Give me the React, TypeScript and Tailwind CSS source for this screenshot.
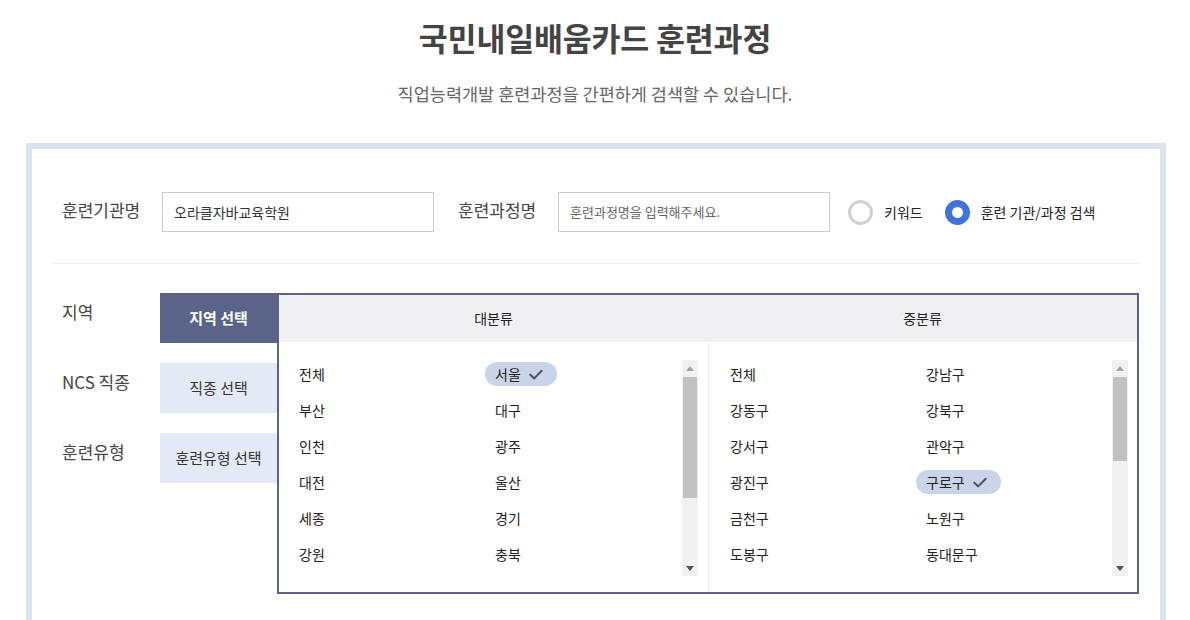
import React from 'react';

const CheckMark = () => (
  <svg width="14" height="11" viewBox="0 0 14 11" fill="none">
    <path d="M1.3 5.8 L5.2 9.4 L12.7 1.8" stroke="#4a5161" strokeWidth="2" strokeLinecap="round" strokeLinejoin="round" />
  </svg>
);

function Item({ label, selected }: { label: string; selected?: boolean }) {
  return (
    <div className="h-[36px] flex items-center">
      <span
        className={
          selected
            ? '-ml-[10px] inline-flex items-center h-[24px] pl-[10px] pr-[14px] gap-[8px] rounded-full bg-[#cad4e8]'
            : 'inline-flex items-center h-[24px]'
        }
      >
        {label}
        {selected && <CheckMark />}
      </span>
    </div>
  );
}

function ScrollBar({ thumbClass }: { thumbClass: string }) {
  return (
    <div className="w-[16px] h-[216px] bg-[#f1f1f1] flex flex-col shrink-0 mt-[18px]">
      <div className="h-[17px] flex items-center justify-center">
        <svg width="8" height="5" viewBox="0 0 8 5"><path d="M0 5 L4 0 L8 5 Z" fill="#a3a3a3" /></svg>
      </div>
      <div className={`mx-[1px] bg-[#c1c1c1] ${thumbClass}`} />
      <div className="flex-1" />
      <div className="h-[16px] flex items-center justify-center">
        <svg width="8" height="5" viewBox="0 0 8 5"><path d="M0 0 L8 0 L4 5 Z" fill="#505050" /></svg>
      </div>
    </div>
  );
}

function List({ items, selected }: { items: string[]; selected: string }) {
  return (
    <div className="grid grid-cols-[196px_1fr] pt-[14px] text-[14px] text-[#222]">
      {items.map((it) => (
        <Item key={it} label={it} selected={it === selected} />
      ))}
    </div>
  );
}

export default function App() {
  const major = ['전체', '서울', '부산', '대구', '인천', '광주', '대전', '울산', '세종', '경기', '강원', '충북'];
  const minor = ['전체', '강남구', '강동구', '강북구', '강서구', '관악구', '광진구', '구로구', '금천구', '노원구', '도봉구', '동대문구'];
  return (
    <div className="w-[1190px] h-[620px] overflow-hidden bg-white font-['Noto_Sans_CJK_KR','Noto_Sans',sans-serif]">
      <div className="pt-[14px] text-center">
        <h1 className="text-[31.5px] leading-[46px] font-bold text-[#444] tracking-[-0.2px]">국민내일배움카드 훈련과정</h1>
        <p className="mt-[21px] text-[17.5px] leading-[26px] text-[#666]">직업능력개발 훈련과정을 간편하게 검색할 수 있습니다.</p>
      </div>

      <div className="mt-[36px] ml-[26px] w-[1140px] h-[500px] border-[6px] border-[#dde3ee] px-[20px] pt-[43px]">
        {/* Row 1 */}
        <div className="flex items-center h-[40px] pl-[10px] text-[#444]">
          <span className="w-[100px] text-[17px] leading-[24px] -mt-[4px]">훈련기관명</span>
          <div className="w-[272px] h-[40px] border border-[#ccc] flex items-center pl-[11px] text-[14px] text-[#333]">오라클자바교육학원</div>
          <span className="ml-[24px] w-[100px] text-[17px] leading-[24px] -mt-[4px]">훈련과정명</span>
          <div className="w-[272px] h-[40px] border border-[#ccc] flex items-center pl-[11px] text-[13px] text-[#666]">훈련과정명을 입력해주세요.</div>
          <div className="ml-[18px] flex items-center">
            <span className="w-[25px] h-[25px] rounded-full border-[3px] border-[#d0d0d0] bg-white" />
            <span className="ml-[11px] text-[14px] text-[#222]">키워드</span>
          </div>
          <div className="ml-[22px] flex items-center">
            <span className="w-[25px] h-[25px] rounded-full border-[7px] border-[#3f73dd] bg-white" />
            <span className="ml-[11px] text-[14px] text-[#222]">훈련 기관/과정 검색</span>
          </div>
        </div>

        <div className="mt-[31px] h-px bg-[#efefef]" />

        {/* Row 2 */}
        <div className="mt-[29px] flex">
          <div className="w-[108px] pl-[10px] flex flex-col gap-[20px] text-[17px] leading-[24px] text-[#444]">
            <div className="h-[50px] pt-[7px]">지역</div>
            <div className="h-[50px] pt-[7px]">NCS 직종</div>
            <div className="h-[50px] pt-[7px]">훈련유형</div>
          </div>
          <div className="w-[117px] flex flex-col gap-[20px] text-[15px]">
            <div className="h-[50px] flex items-center justify-center bg-[#5a6388] text-white font-bold">지역 선택</div>
            <div className="h-[50px] flex items-center justify-center bg-[#e3eaf5] text-[#333]">직종 선택</div>
            <div className="h-[50px] flex items-center justify-center bg-[#e3eaf5] text-[#333]">훈련유형 선택</div>
          </div>
          <div className="w-[862px] h-[301px] border-2 border-[#5d6387] flex flex-col">
            <div className="h-[47px] bg-[#f0f0f3] flex text-[14px] text-[#222]">
              <div className="w-[429px] flex items-center justify-center">대분류</div>
              <div className="flex-1 flex items-center justify-center">중분류</div>
            </div>
            <div className="flex-1 flex">
              <div className="w-[429px] flex items-start pl-[20px] pr-[10px]">
                <div className="flex-1 min-w-0">
                  <List items={major} selected="서울" />
                </div>
                <ScrollBar thumbClass="h-[121px]" />
              </div>
              <div className="flex-1 border-l border-[#ececec] flex items-start pl-[21px] pr-[9px]">
                <div className="flex-1 min-w-0">
                  <List items={minor} selected="구로구" />
                </div>
                <ScrollBar thumbClass="h-[84px]" />
              </div>
            </div>
          </div>
        </div>
      </div>
    </div>
  );
}
